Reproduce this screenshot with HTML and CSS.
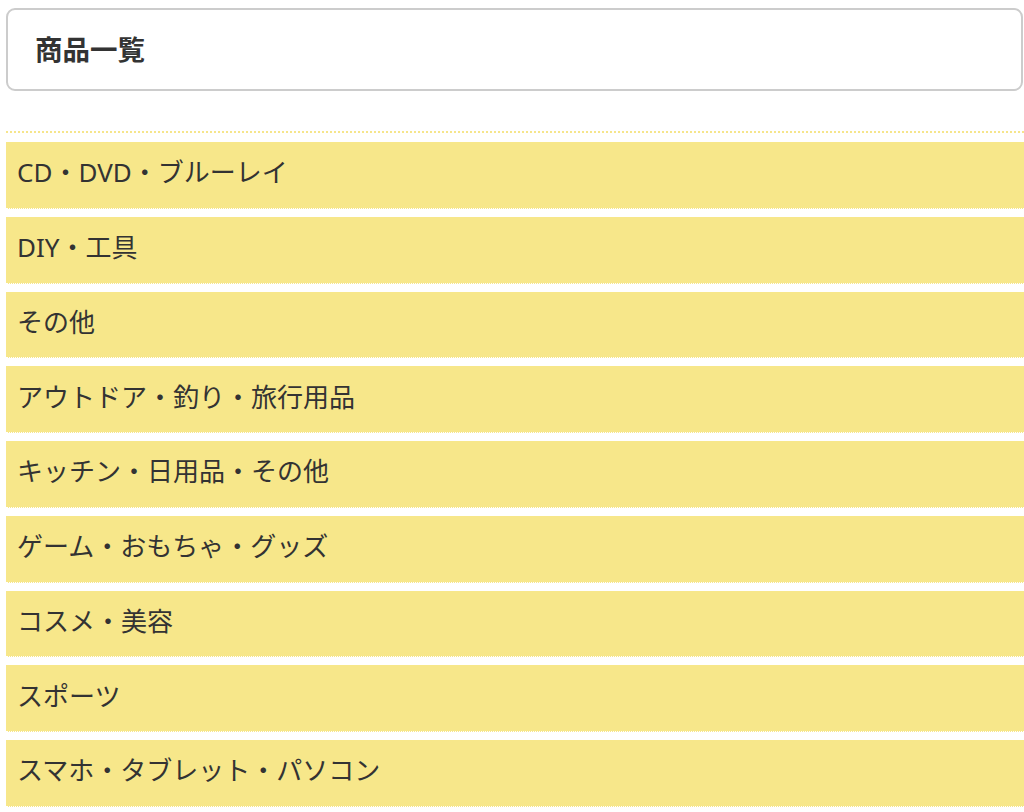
FILE: index.html
```html
<!DOCTYPE html>
<html lang="ja">
<head>
<meta charset="utf-8">
<title>商品一覧</title>
<link rel="stylesheet" href="styles.css">
</head>
<body>
<div class="page">
  <header class="title-box">
    <h1 class="title">商品一覧</h1>
  </header>
  <ul class="cat-list">
    <li class="cat-item">CD・DVD・ブルーレイ</li>
    <li class="cat-item">DIY・工具</li>
    <li class="cat-item">その他</li>
    <li class="cat-item">アウトドア・釣り・旅行用品</li>
    <li class="cat-item">キッチン・日用品・その他</li>
    <li class="cat-item">ゲーム・おもちゃ・グッズ</li>
    <li class="cat-item">コスメ・美容</li>
    <li class="cat-item">スポーツ</li>
    <li class="cat-item">スマホ・タブレット・パソコン</li>
  </ul>
</div>
</body>
</html>
```
FILE: styles.css
```css
html, body {
  margin: 0;
  padding: 0;
  background: #ffffff;
}
body {
  font-family: "Noto Sans CJK JP", "Noto Sans", sans-serif;
  color: #333333;
}
.page {
  padding: 8px 0 0 6px;
}
.title-box {
  box-sizing: border-box;
  width: 1017px;
  height: 83px;
  border: 2px solid #cccccc;
  border-radius: 9px;
  display: flex;
  align-items: center;
  padding-left: 27px;
}
.title {
  margin: 0;
  font-size: 27.5px;
  font-weight: 700;
  line-height: 1;
  color: #333333;
  position: relative;
  top: -1px;
}
.cat-list {
  list-style: none;
  margin: 40px 0 0 0;
  padding: 9px 0 0 0;
  border-top: 2px dotted #f6e58b;
}
.cat-item {
  box-sizing: border-box;
  height: 66.75px;
  margin-bottom: 8px;
  background: #f7e78a;
  border-bottom: 1px dotted #ffffff;
  display: flex;
  align-items: center;
  padding-left: 11px;
  padding-bottom: 4px;
  font-family: "Noto Sans", "Noto Sans CJK JP", sans-serif;
  font-size: 26px;
  line-height: 1.2;
  color: #333333;
}
```
